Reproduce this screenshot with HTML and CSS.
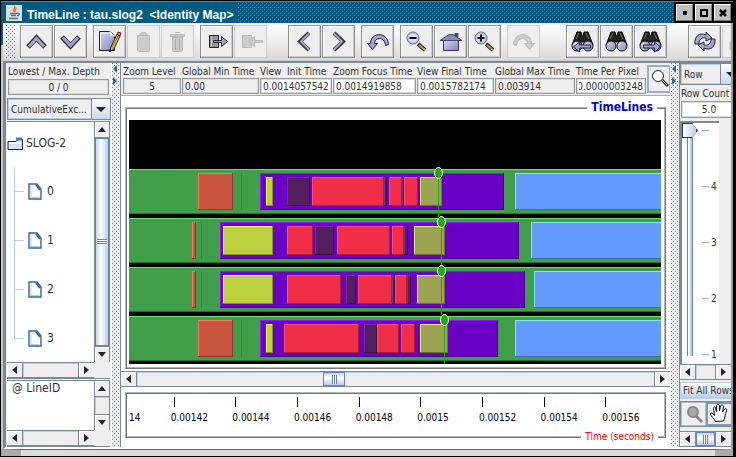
FILE: index.html
```html
<!DOCTYPE html>
<html lang="en">
<head>
<meta charset="utf-8">
<title>TimeLine : tau.slog2 &lt;Identity Map&gt;</title>
<link rel="stylesheet" href="styles.css">
</head>
<body>
<svg width="0" height="0" class="defs" aria-hidden="true">
  <defs>
    <linearGradient id="metal" x1="0" y1="0" x2="1" y2="1"><stop offset="0" stop-color="#d8d8f4"/><stop offset="1" stop-color="#8484b8"/></linearGradient>
    <g id="binoculars">
      <path d="M6 20L11 7h4l1 4h1l1-4h4l5 13-4-1-5-2h-3l-5 2z" fill="#222" stroke="#000"/>
      <path d="M10 14l3-6M20 8l3 6" stroke="#777"/>
      <circle cx="11" cy="21" r="5" fill="url(#metal)" stroke="#111"/>
      <circle cx="22" cy="21" r="5" fill="url(#metal)" stroke="#111"/>
      <path d="M8 20l2-2M19 20l2-2" stroke="#fff"/>
    </g>
    <g id="lens">
      <path d="M18 19l7 6" stroke="#222" stroke-width="4"/>
      <path d="M19 20l6 5" stroke="#d98e5a" stroke-width="2"/>
      <circle cx="13" cy="13" r="6" fill="#dcdcf8" stroke="#555577"/>
      <circle cx="13" cy="13" r="5" fill="none" stroke="#b4b4dc"/>
    </g>
    <g id="file">
      <path d="M1 1h8l4 5v10H1z" fill="#fff" stroke="#336699" stroke-width="1.4"/>
      <path d="M2.500 14.500h9" stroke="#b8cfe5"/>
      <path d="M8 2l4 5" stroke="#336699" stroke-width="2"/>
      <path d="M3 2v12" stroke="#b8cfe5"/>
    </g>
  </defs>
</svg>

<div class="window">
  <header class="titlebar">
    <svg class="java" width="16" height="16" viewBox="0 0 16 16" aria-hidden="true">
      <rect width="16" height="16" fill="#ddd"/><path d="M8 1c3 2-2 3 0 6M10 3c1 1-2 2-1 4" fill="none" stroke="#e76f00" stroke-width="1.300"/>
      <path d="M4 8.500h7M5 10.500h5M11 8.500c3-1 3 2 0 2M3 13.500h9" fill="none" stroke="#4a7896" stroke-width="1.300"/>
    </svg>
    <h1>TimeLine : tau.slog2&nbsp; &lt;Identity Map&gt;</h1>
    <div class="dots"></div>
    <div class="controls">
      <button aria-label="Minimize"><svg width="14" height="14"><path d="M5 5h4v4H5z"/></svg></button>
      <button aria-label="Maximize"><svg width="14" height="14"><path d="M4 4h6v6H4z" fill="none" stroke="#000" stroke-width="2"/></svg></button>
      <button aria-label="Close"><svg width="14" height="14"><path d="M4 4l6 6M10 4l-6 6" stroke="#000" stroke-width="2.500"/></svg></button>
    </div>
  </header>

  <div class="content">
    <nav class="toolbar" aria-label="Tools">
      <div class="grip"></div>
      <div class="group">
        <button aria-label="Up"><svg viewBox="1 1 31 31"><path d="M8 22l8.500-9L25 22" fill="none" stroke="#333" stroke-width="5"/><path d="M9 21.500l7.500-8 7.500 8" fill="none" stroke="#a2a2cc" stroke-width="3"/></svg></button>
        <button aria-label="Down"><svg viewBox="1 1 31 31"><path d="M8 12l8.500 9L25 12" fill="none" stroke="#333" stroke-width="5"/><path d="M9 12.500l7.500 8 7.500-8" fill="none" stroke="#a2a2cc" stroke-width="3"/></svg></button>
      </div>
      <div class="group">
        <button aria-label="Edit"><svg viewBox="1 1 31 31"><path d="M6.500 6.500h11l4 4v15h-15z" fill="url(#metal)" stroke="#222"/><path d="M7.500 24V8h10" fill="none" stroke="#fff"/><path d="M17 6v5h5" fill="#fff" stroke="#ccd"/><path d="M24 9l-6 13-2 5 5-3 6-13z" fill="#e8c33c" stroke="#222"/><path d="M25 11l-6 12" stroke="#977a17"/><path d="M24 9l1-2 3 1-1 3z" fill="#e08080" stroke="#622"/><path d="M16 27l1-3 2 1.500z" fill="#111"/></svg></button>
        <button aria-label="Paste" disabled><svg viewBox="1 1 31 31"><path d="M10.500 10.500h12v15l-1 1h-10l-1-1z" fill="#ccc" stroke="#bbb"/><path d="M12.500 10.500l2-3h4l2 3z" fill="#ccc" stroke="#b5b5b5"/></svg></button>
        <button aria-label="Delete" disabled><svg viewBox="1 1 31 31"><path d="M11.500 12.500h10v13l-1 1h-8l-1-1z" fill="#ccc" stroke="#b8b8b8"/><path d="M9.500 9.500h14v2h-14zM14 7.500h5" fill="#ccc" stroke="#b8b8b8"/><path d="M14.500 14v11M18.500 14v11" stroke="#aaa"/></svg></button>
      </div>
      <div class="group">
        <button aria-label="Expand"><svg viewBox="1 1 31 31"><path d="M9.500 10.500h9v12h-9z" fill="#999" stroke="#222"/><path d="M11.500 12v9" stroke="#ccc"/><path d="M13.500 15.500h8v-4l6 5-6 5v-4h-8z" fill="#a2a2cc" stroke="#222"/></svg></button>
        <button aria-label="Collapse" disabled><svg viewBox="1 1 31 31"><path d="M8.500 10.500h9v12h-9z" fill="#ccc" stroke="#b8b8b8"/><path d="M28.500 15.500h-8v-4l-6 5 6 5v-4h8z" fill="#ccc" stroke="#b8b8b8"/></svg></button>
      </div>
      <div class="group wide">
        <button aria-label="Backward"><svg viewBox="1 1 31 31"><path d="M21 8l-9 8.500 9 8.500" fill="none" stroke="#333" stroke-width="4"/><path d="M21 8.500l-8 8 8 8" fill="none" stroke="#a2a2cc" stroke-width="2"/></svg></button>
        <button aria-label="Forward"><svg viewBox="1 1 31 31"><path d="M12 8l9 8.500-9 8.500" fill="none" stroke="#333" stroke-width="4"/><path d="M12 8.500l8 8-8 8" fill="none" stroke="#a2a2cc" stroke-width="2"/></svg></button>
      </div>
      <div class="group">
        <button aria-label="Undo zoom"><svg viewBox="1 1 31 31"><path d="M6.500 18.500h3c0-11 17-13 18 1l-3 1c-1-10-11-8-11-2h3l-5 6z" fill="#a2a2dc" stroke="#222"/></svg></button>
      </div>
      <div class="group">
        <button aria-label="Zoom out"><svg viewBox="1 1 31 31"><use href="#lens"/><path d="M9.500 13h7" stroke="#000" stroke-width="2"/></svg></button>
        <button aria-label="Zoom home"><svg viewBox="1 1 31 31"><path d="M9.500 15h15v10.500h-15z" fill="url(#metal)" stroke="#336"/><path d="M20.500 8h4v4h-4z" fill="#447"/><path d="M6 15.500l9-6h4l9 6z" fill="#8c8cba" stroke="#447"/></svg></button>
        <button aria-label="Zoom in"><svg viewBox="1 1 31 31"><use href="#lens"/><path d="M9.500 13h7M13 9.500v7" stroke="#000" stroke-width="2"/></svg></button>
      </div>
      <div class="group">
        <button aria-label="Redo zoom" disabled><svg viewBox="1 1 31 31"><path d="M27.500 18.500h-3c0-11-17-13-18 1l3 1c1-10 11-8 11-2h-3l5 6z" fill="#ccc" stroke="#b8b8b8"/></svg></button>
      </div>
      <div class="group wider">
        <button aria-label="Search backward"><svg viewBox="1 1 31 31"><use href="#binoculars"/><path d="M7.500 22l6-5v3h11v3h-11v4z" fill="#a2a2dc" stroke="#224"/></svg></button>
        <button aria-label="Search"><svg viewBox="1 1 31 31"><use href="#binoculars"/></svg></button>
        <button aria-label="Search forward"><svg viewBox="1 1 31 31"><use href="#binoculars"/><path d="M26.500 22l-6-5v3h-11v3h11v4z" fill="#a2a2dc" stroke="#224"/></svg></button>
      </div>
      <div class="group wide">
        <button aria-label="Refresh"><svg viewBox="1 1 31 31"><path d="M7 19c-1-8 5-12 11-9V7l6 6-6 3v-3c-4-1-7 1-7 6z" fill="#a2a2dc" stroke="#222"/><path d="M27 14c1 8-5 12-11 9v3l-6-6 6-3v3c4 1 7-1 7-6z" fill="#a2a2dc" stroke="#222"/></svg></button>
        <button aria-label="Print" disabled><svg viewBox="1 1 31 31"><path d="M8 17h16v8H8z" fill="#ccc" stroke="#b8b8b8"/></svg></button>
      </div>
    </nav>

    <main class="split">
      <aside class="left">
        <label class="field depth">Lowest / Max. Depth<input readonly value="0 / 0"></label>
        <div class="combo"><select aria-label="View map"><option>CumulativeExc...</option></select><i></i></div>
        <div class="pane tree-pane">
          <div class="tree">
            <div class="root"><svg width="17" height="14" aria-hidden="true"><path d="M1 12.500V4.500h8l2-2h4.500v10z" fill="#d4e2f0" stroke="#222"/><path d="M9 2h6" stroke="#5577bb" stroke-width="3"/><path d="M2 5.500h13M2 6.500h13" stroke="#fff"/></svg>SLOG-2</div>
            <ul>
              <li><svg width="14" height="17" aria-hidden="true"><use href="#file"/></svg>0</li>
              <li><svg width="14" height="17" aria-hidden="true"><use href="#file"/></svg>1</li>
              <li><svg width="14" height="17" aria-hidden="true"><use href="#file"/></svg>2</li>
              <li><svg width="14" height="17" aria-hidden="true"><use href="#file"/></svg>3</li>
            </ul>
          </div>
          <div class="bar v"><button class="up" aria-label="Scroll up"></button><div class="track"><div class="thumb full"></div></div><button class="down" aria-label="Scroll down"></button></div>
          <div class="bar h"><button class="prev" aria-label="Scroll left"></button><div class="track"></div><button class="next" aria-label="Scroll right"></button></div>
        </div>
        <div class="pane id-pane">
          <div class="ids">@ LineID</div>
          <div class="bar v"><button class="up" aria-label="Scroll up"></button><div class="track"></div><button class="down" aria-label="Scroll down"></button></div>
          <div class="bar h"><button class="prev" aria-label="Scroll left"></button><div class="track"></div><button class="next" aria-label="Scroll right"></button></div>
        </div>
      </aside>

      <div class="divider"></div>

      <section class="center">
        <div class="status">
          <label class="field">Zoom Level<input class="mid" readonly value="5"></label>
          <label class="field">Global Min Time<input readonly value="0.00"></label>
          <label class="field">View&nbsp; Init Time<input value="0.0014057542"></label>
          <label class="field">Zoom Focus Time<input value="0.0014919858"></label>
          <label class="field">View Final Time<input value="0.0015782174"></label>
          <label class="field">Global Max Time<input readonly value="0.003914"></label>
          <label class="field">Time Per Pixel<input class="tail" value="0.0000003248"></label>
          <button class="mode" aria-label="Zoom mode"><svg width="20" height="24" viewBox="0 0 20 24"><circle cx="9" cy="9" r="5.500" fill="#fff" stroke="#222"/><path d="M13 13l6 6" stroke="#222" stroke-width="3"/><path d="M13 13l5 5" stroke="#fff"/></svg></button>
        </div>
        <section class="frame chart">
          <h2>TimeLines</h2>
          <svg id="timelines" role="img" aria-label="Timelines 0 to 3"></svg>
        </section>
        <div class="bar h main-bar"><button class="prev" aria-label="Scroll left"></button><div class="track"><div class="thumb small"></div></div><button class="next" aria-label="Scroll right"></button></div>
        <section class="frame ruler">
          <ol><li>0.0014</li><li>0.00142</li><li>0.00144</li><li>0.00146</li><li>0.00148</li><li>0.0015</li><li>0.00152</li><li>0.00154</li><li>0.00156</li></ol>
          <h3>Time (seconds)</h3>
        </section>
      </section>

      <div class="divider"></div>

      <aside class="right">
        <div class="combo"><select aria-label="Row adjustment"><option>Row</option></select><i></i></div>
        <label class="field">Row Count<input class="mid" value="5.0"></label>
        <div class="slider">
          <input type="range" min="1" max="5" value="5" aria-label="Row count">
          <ol><li></li><li>4</li><li>3</li><li>2</li><li>1</li></ol>
        </div>
        <div class="bar h"><button class="prev" aria-label="Scroll left"></button><div class="track"></div><button class="next" aria-label="Scroll right"></button></div>
        <button class="fit">Fit All Rows</button>
        <div class="modes">
          <button aria-label="Zoom"><svg width="24" height="23"><circle cx="11" cy="9" r="5" fill="#aaa" stroke="#888" stroke-width="2"/><path d="M14 13l6 6" stroke="#888" stroke-width="3"/></svg></button>
          <button class="on" aria-label="Hand"><svg width="24" height="23"><path d="M8.500 19.500c-1-3-5-5-5-8 1-1 3 0 4 2l-1-7c0-2 2-2 2 0l1 3V4c0-2 3-2 3 0v5l1-5c1-2 3-1 3 1l-1 5 2-3c1-1 3 0 2 2-2 4-1 6-3 10z" fill="#fff" stroke="#111"/></svg></button>
        </div>
        <div class="bar h last"><button class="prev" aria-label="Scroll left"></button><div class="track"><div class="thumb fill"></div></div><button class="next" aria-label="Scroll right"></button></div>
      </aside>
    </main>
  </div>
  <footer class="resize"></footer>
</div>
<script src="script.js"></script>
</body>
</html>
```
FILE: styles.css
```css
* { box-sizing: border-box; }
body { margin: 0; background: #000; color: #333; font: 10px/13px "DejaVu Sans Condensed", "Noto Sans", sans-serif; }
h1, h2, h3, ol, ul { margin: 0; padding: 0; list-style: none; }
button, input, select { font: inherit; color: inherit; margin: 0; padding: 0; border-radius: 0; }
svg { display: block; }
.defs { position: absolute; }
.window { display: flex; flex-direction: column; height: 100vh; padding: 1px 3px 1px 1px; overflow: hidden; background: linear-gradient(#005c85 44px, #c9c5c0 44px) content-box; }

.titlebar { display: flex; align-items: center; height: 22px; background: #005c85; border-top: 1px solid #3f8fb5; color: #fff; padding-left: 5px; flex: none; }
.titlebar h1 { font: bold 12px/18px "Liberation Sans", sans-serif; margin: 4px 5px 0 5px; white-space: nowrap; }
.dots { flex: 1; height: 19px; background: conic-gradient(at 1px 1px, transparent 75%, #2f9fd0 75%) 0 0/4px 4px, conic-gradient(at 1px 1px, transparent 75%, #00324d 75%) 1px 1px/4px 4px, conic-gradient(at 1px 1px, transparent 75%, #2f9fd0 75%) 2px 2px/4px 4px, conic-gradient(at 1px 1px, transparent 75%, #00324d 75%) 3px 3px/4px 4px; }
.controls { display: flex; gap: 2px; padding: 2px; background: #000; align-self: stretch; }
.controls button { width: 17px; height: 17px; border: 1px solid #777; border-top-color: #fff; border-left-color: #fff; background: #c0c0c0; display: grid; place-items: center; }

.content { flex: 1; min-height: 0; display: flex; flex-direction: column; border-left: 2px solid transparent; border-right: 2px solid #999; background: #eee; background-clip: padding-box; }
.toolbar { display: flex; align-items: center; flex: none; height: 38px; padding-left: 3px; overflow: hidden; background: linear-gradient(#fff, #dadada); border-bottom: 1px solid #ccc; }
.grip { width: 10px; height: 33px; margin-right: 4px; flex: none; }
.grip, .divider { background: conic-gradient(at 1px 1px, transparent 75%, #777 75%) 0 0/4px 4px, conic-gradient(at 1px 1px, transparent 75%, #777 75%) 2px 2px/4px 4px; }
.group { display: flex; gap: 1px; flex: none; margin-right: 6px; }
.group.wide { margin-left: 15px; }
.group.wider { margin-left: 20px; }
.group button { width: 33px; height: 33px; border: 1px solid #8f8f8f; box-shadow: inset 1px 1px #fff, inset -1px -1px #ccc; background: #eee; }
.group button:disabled { border-color: #ccc; box-shadow: none; }
.group svg { width: 31px; height: 31px; }

.split { flex: 1; min-height: 0; display: flex; border-top: 2px solid #7a8a99; border-left: 3px solid #7a8a99; border-bottom: 2px solid #fff; overflow: hidden; }
.left { width: 105px; flex: none; display: flex; flex-direction: column; background: #eee; padding: 1px 0 0 1px; }
.field { display: block; white-space: nowrap; overflow: hidden; padding-left: 1px; }
.field input { display: block; width: 100%; height: 16px; border: 1px solid #999; box-shadow: inset 1px 1px #ddd, inset -1px -1px #ddd; background: #fff; padding: 0 2px; outline: none; }
.field input[readonly] { background: #eee; }
.field .mid, .depth input { text-align: center; }
.field .tail { direction: rtl; }
.depth { height: 34px; margin-right: 2px; padding-top: 1px; }
.depth input { margin-top: 1px; }
.combo { display: grid; grid-template-columns: 1fr 19px; height: 22px; flex: none; border: 1px solid #7a8a99; background: #eee; overflow: hidden; }
.combo select { grid-area: 1/1/2/3; appearance: none; border: 1px solid #b8cfe5; background: none; padding-left: 2px; min-width: 0; outline: none; }
.combo i { grid-area: 1/2; display: grid; place-items: center; background: linear-gradient(#fff, #c4d8ea); border-left: 1px solid #7a8a99; pointer-events: none; }
.combo i::before { content: ""; border: 5px solid transparent; border-top-color: #222; border-bottom: 0; }

.pane { display: grid; grid-template: minmax(0, 1fr) 16px / minmax(0, 1fr) 16px; background: #eee; border-top: 1px solid #7a8a99; border-bottom: 1px solid #7a8a99; margin: 0 1px 0 0; }
.tree-pane { flex: 1; min-height: 0; margin-top: 1px; }
.id-pane { height: 67px; flex: none; margin-top: 1px; }
.tree, .ids { background: #fff; font-size: 12px; overflow: hidden; }
.ids { padding: 1px 5px; }
.root { display: flex; align-items: center; gap: 2px; height: 17px; margin-top: 13px; }
.tree ul { margin: 15px 0 0 7px; display: flex; flex-direction: column; }
.tree li { display: flex; align-items: center; height: 49px; padding-left: 14px; gap: 5px; background: linear-gradient(#b8cfe5, #b8cfe5) 0 0/1px 100% no-repeat, linear-gradient(#b8cfe5, #b8cfe5) 0 24px/10px 1px no-repeat; }
.tree li:last-child { background-size: 1px 24px, 10px 1px; }

.bar { display: flex; background: #eee; border: 0 solid #7a8a99; flex: none; min-width: 0; min-height: 0; }
.bar.h { height: 16px; border-width: 1px 0; }
.bar.v { flex-direction: column; border-width: 0 1px; }
.bar button { flex: none; width: 15px; height: 14px; border: 0; background: #eee; display: grid; place-items: center; box-shadow: inset 1px 1px #fff; }
.bar button::before { content: ""; border: 4px solid transparent; }
.bar .prev::before { border-right: 5px solid #222; border-left: 0; }
.bar .next::before { border-left: 5px solid #222; border-right: 0; }
.bar .up::before { border-bottom: 5px solid #222; border-top: 0; }
.bar .down::before { border-top: 5px solid #222; border-bottom: 0; }
.bar.v button { width: 14px; height: 15px; }
.track { flex: 1; min-width: 0; border: 0 solid #7a8a99; box-shadow: inset 1px 1px #b8cfe5; }
.bar.h .track { border-width: 0 1px; }
.bar.v .track { border-width: 1px 0; }
.thumb { display: grid; place-items: center; border: 1px solid #6382bf; }
.thumb::before { content: ""; width: 5px; height: 9px; background: repeating-linear-gradient(90deg, #6382bf 0 1px, #fff 1px 2px); }
.thumb.full { height: 100%; background: linear-gradient(90deg, #c4d8ea, #fff 40%, #b8cfe5); }
.thumb.full::before { width: 10px; height: 6px; background: repeating-linear-gradient(#6382bf 0 1px, #fff 1px 2px); }
.thumb.small, .thumb.fill { height: 14px; background: linear-gradient(#c4d8ea, #fff 40%, #b8cfe5); }
.thumb.small { width: 22px; margin-left: 36%; }

.divider { width: 10px; flex: none; position: relative; background-color: #eee; border-left: 1px solid #fff; border-right: 1px solid #7a8a99; }
.divider::before, .divider::after { content: ""; position: absolute; top: 2px; left: 1px; border: 4px solid transparent; border-right-color: #3b5ea8; border-left: 0; }
.divider::after { top: 14px; border-left: 4px solid #3b5ea8; border-right: 0; }

.center { flex: 1; min-width: 0; display: flex; flex-direction: column; background: #fff; }
.status { display: flex; flex: none; height: 33px; padding: 2px 0 0 1px; background: #eee; border-bottom: 1px solid #aaa; overflow: hidden; }
.status .field { flex: 0 0 78px; }
.status .field:first-child { flex-basis: 59px; }
.status .field:nth-child(3) { flex-basis: 73px; }
.status .field:nth-child(4) { flex-basis: 84px; }
.status .field:nth-child(6) { flex-basis: 81px; }
.status .field:nth-child(7) { flex-basis: 71px; }
.mode { flex: none; width: 24px; height: 28px; margin-left: 1px; border: 2px solid #9ab0c8; background: #eee; }
.frame { position: relative; margin: 0 4px; border: 1px solid; border-color: #b5b5b5 #777 #777 #b5b5b5; box-shadow: inset 1px 1px #777, inset -1px -1px #b5b5b5; }
.frame h2, .frame h3 { position: absolute; right: 10px; padding: 0 4px; background: #fff; white-space: nowrap; }
.frame h2 { top: -8px; right: 8px; color: #0000e0; font: bold 12px/15px "DejaVu Sans Condensed", "DejaVu Sans", sans-serif; }
.frame h3 { bottom: -6px; right: 7px; color: #f00; font-size: 10px; font-weight: normal; }
.chart { flex: 1; min-height: 0; margin-top: 11px; padding: 12px 4px 4px 3px; }
.chart svg { width: 100%; height: 100%; background: #000; }
.main-bar { margin: 2px 0 5px; }
.ruler { height: 46px; flex: none; margin-bottom: 9px; padding: 4px 4px 0 3px; color: #000; }
.ruler ol { display: flex; overflow: hidden; }
.ruler li { flex: 0 0 calc((100% + 23px) / 9); padding-top: 14px; background: linear-gradient(#000, #000) 3px 0/1px 10px no-repeat; }
.ruler li:first-child { margin-left: -20px; }

.right { width: 51px; flex: none; display: flex; flex-direction: column; background: #eee; overflow: hidden; }
.right .combo { width: 62px; grid-template-columns: 1fr 21px; }
.right .field { padding-top: 2px; flex: none; }
.right .field input { width: 56px; height: 17px; margin-top: 1px; }
.slider { flex: 1; min-height: 0; display: flex; border: 1px solid #7a8a99; border-width: 2px 0 0 2px; width: 39px; margin-top: 3px; background: #fff; }
.slider input { writing-mode: vertical-lr; direction: rtl; appearance: none; width: 16px; height: calc(100% - 8px); background: linear-gradient(90deg, #6382bf 0 1px, #fff 1px 3px, #b8cfe5 3px 5px, #6382bf 5px) 5px 0/6px 100% no-repeat; flex: none; }
.slider input::-webkit-slider-thumb { appearance: none; width: 16px; height: 15px; background: linear-gradient(90deg, #fff, #b8cfe5) 1px 1px/13px 13px no-repeat, #333; clip-path: polygon(0 0, 60% 0, 100% 50%, 60% 100%, 0 100%); }
.slider ol { flex: 1; display: flex; flex-direction: column; justify-content: space-between; padding: 1px 0 3px 4px; }
.slider li { display: flex; align-items: center; gap: 2px; height: 13px; }
.slider li::before { content: ""; width: 7px; height: 1px; background: #9ab5cf; }
.fit { flex: none; width: 64px; height: 17px; margin: 2px 0; padding-left: 2px; border: 1px solid #b8cfe5; background: linear-gradient(#fff, #b8cfe5); white-space: nowrap; text-align: left; }
.modes { display: flex; flex: none; height: 26px; margin: 0 0 4px; border: 1px solid #7a8a99; }
.modes button { flex: none; width: 25px; border: 1px solid #bbb; background: #eee; }
.modes .on { border: 2px solid #7a9abf; border-right: 0; }
.modes .on svg { margin: -2px 0 0 -1px; }

.resize { height: 7px; flex: none; border-top: 1px solid #666; border-left: 20px solid #aaa; border-right: 18px solid #aaa; background: #ddd; }
```
FILE: script.js
```js
// Each timeline lists its nested states as [kind, start, end] in chart units.
const PITCH = 49;
const FIRST = 49;
const COLORS = {
  green: ["#419f4b", "#66e070", "#286e30"],
  violet: ["#6900c4", "#9310ff", "#47008a"],
  blue: ["#649bff", "#84e4ff", "#4568b5"],
  orange: ["#c75540", "#ff7a5c", "#8d3828"],
  yellow: ["#bcd33f", "#fdff56", "#84942c"],
  plum: ["#53205f", "#753085", "#36143f"],
  red: ["#f02e48", "#ff4c6c", "#a82034"],
  olive: ["#9ca351", "#e0eb70", "#6b7036"]
};
const LINES = [
  { tick: 112, marker: 309, outer: [["orange", 69, 104], ["violet", 131, 375], ["blue", 386, 3000]],
    inner: [["yellow", 137, 144], ["plum", 158, 181], ["plum", 255, 258], ["red", 183, 255], ["red", 260, 273], ["plum", 273, 275], ["red", 275, 289], ["olive", 291, 313]] },
  { tick: 72, marker: 312, outer: [["orange", 63, 67], ["violet", 91, 390], ["blue", 402, 3000]],
    inner: [["yellow", 94, 144], ["red", 158, 184], ["plum", 186, 205], ["red", 208, 261], ["red", 263, 275], ["plum", 275, 279], ["olive", 285, 316]] },
  { tick: 72, marker: 312, outer: [["orange", 63, 67], ["violet", 91, 396], ["blue", 405, 3000]],
    inner: [["yellow", 94, 144], ["red", 158, 212], ["plum", 217, 227], ["red", 229, 263], ["plum", 263, 266], ["red", 266, 278], ["plum", 278, 282], ["olive", 288, 316]] },
  { tick: 112, marker: 315, outer: [["orange", 69, 104], ["violet", 131, 369], ["blue", 386, 3000]],
    inner: [["yellow", 137, 144], ["red", 155, 230], ["plum", 235, 248], ["red", 248, 270], ["red", 272, 286], ["olive", 291, 319]] }
];

function block(kind, x1, x2, y, h) {
  const [face, light, dark] = COLORS[kind];
  const w = x2 - x1;
  return `<rect x="${x1}" y="${y}" width="${w}" height="${h}" fill="${dark}"/>` +
    `<rect x="${x1}" y="${y}" width="${w - 1}" height="${h - 1}" fill="${light}"/>` +
    `<rect x="${x1 + 1}" y="${y + 1}" width="${Math.max(w - 2, 0)}" height="${h - 2}" fill="${face}"/>`;
}

let art = "";
LINES.forEach((line, i) => {
  const y = FIRST + i * PITCH;
  art += block("green", -2, 3000, y, 45);
  line.outer.forEach(([k, a, b]) => { art += block(k, a, b, y + 4, 37); });
  art += `<rect x="${line.tick}" y="${y + 4}" width="1" height="37" fill="#8848a8"/>`;
  line.inner.forEach(([k, a, b]) => { art += block(k, a, b, y + 8, 29); });
});
LINES.forEach((line, i) => {
  const y = FIRST + i * PITCH + 4;
  art += `<rect x="${line.marker}" y="${y}" width="1" height="44" fill="#18b000"/>` +
    `<ellipse cx="${line.marker + 0.5}" cy="${y}" rx="4" ry="5.5" fill="#18b000" stroke="#fff"/>`;
});
document.getElementById("timelines").innerHTML = art;
```
